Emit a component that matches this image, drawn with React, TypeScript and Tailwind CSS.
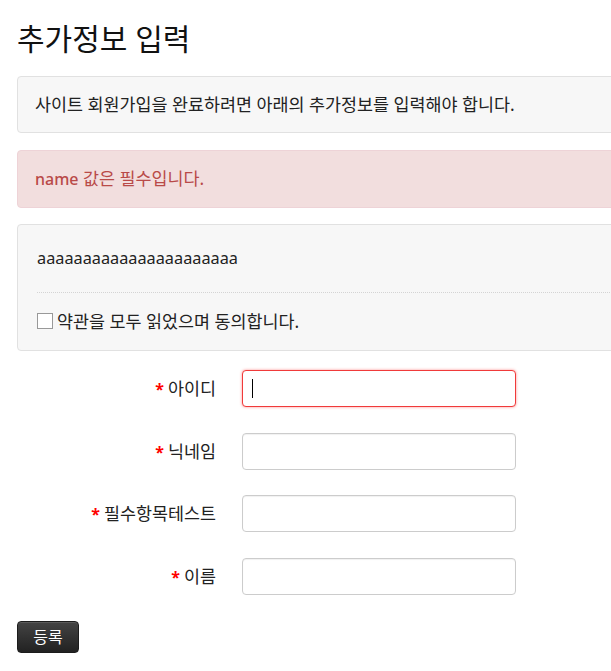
import React from "react";

const FONT = { fontFamily: '"Noto Sans", "Noto Sans CJK KR", sans-serif' };

const fields = [
  { id: "user_id", label: "아이디", focused: true },
  { id: "nick_name", label: "닉네임" },
  { id: "test_required", label: "필수항목테스트" },
  { id: "user_name", label: "이름" },
];

function Field({ label, focused }: { label: string; focused?: boolean }) {
  return (
    <div className="flex h-[37px] items-center gap-[26px]">
      <label className="w-[199px] text-right text-[17.4px] leading-[24px] text-[#222]">
        <span className="mr-[4px] text-[16px] font-bold text-[#f00]">*</span>
        {label}
      </label>
      <div className="relative">
        <input
          type="text"
          className={`block h-[37px] w-[274px] rounded-[4px] border bg-white px-[9px] text-[15px] caret-transparent outline-none ${
            focused
              ? "border-[#f03a3a] shadow-[0_0_3px_rgba(255,0,0,0.45)]"
              : "border-[#cccccc] shadow-[inset_0_1px_1px_rgba(0,0,0,0.06)]"
          }`}
        />
        {focused && (
          <span className="pointer-events-none absolute left-[10px] top-[9px] h-[19px] w-px bg-black" />
        )}
      </div>
    </div>
  );
}

export default function App() {
  return (
    <div className="w-[611px] overflow-hidden bg-white text-[#222]" style={FONT}>
      <div className="w-[720px] pl-[17px] pb-[18px]">
        {/* Title */}
        <h1 className="pt-[22px] text-[30px] leading-[34px] font-normal text-[#111]">
          추가정보 입력
        </h1>

        {/* Notice */}
        <div className="mt-[20px] rounded-[4px] border border-[#e1e1e1] bg-[#f7f7f7] px-[17px] py-[17px]">
          <p className="text-[17.4px] leading-[21px]">
            사이트 회원가입을 완료하려면 아래의 추가정보를 입력해야 합니다.
          </p>
        </div>

        {/* Error */}
        <div className="mt-[17px] rounded-[4px] border border-[#eed3d7] bg-[#f2dede] px-[17px] py-[17px]">
          <p className="text-[17.4px] leading-[21px] text-[#b94a48]">
            <span className="text-[16px] font-medium">name</span> 값은 필수입니다.
          </p>
        </div>

        {/* Agreement */}
        <div className="mt-[16px] rounded-[4px] border border-[#e1e1e1] bg-[#f7f7f7] px-[19px] pt-[21px] pb-[17px]">
          <p className="text-[16.3px] leading-[24px]">aaaaaaaaaaaaaaaaaaaaaa</p>
          <div className="mt-[22px] border-t border-dotted border-[#d4d4d4]" />
          <label className="mt-[16px] flex items-center text-[17.4px] leading-[24px]">
            <span className="mr-[4px] inline-block h-[16px] w-[16px] border border-[#999] bg-white" />
            약관을 모두 읽었으며 동의합니다.
          </label>
        </div>

        {/* Form */}
        <div className="mt-[19px] flex flex-col gap-[25.5px]">
          {fields.map((f) => (
            <Field key={f.id} label={f.label} focused={f.focused} />
          ))}
        </div>

        <button className="mt-[26px] h-[32px] w-[62px] rounded-[4px] border border-[#1c1c1c] bg-gradient-to-b from-[#444] to-[#222] text-[16px] text-white shadow-[inset_0_1px_0_rgba(255,255,255,0.12)]">
          등록
        </button>
      </div>
    </div>
  );
}
